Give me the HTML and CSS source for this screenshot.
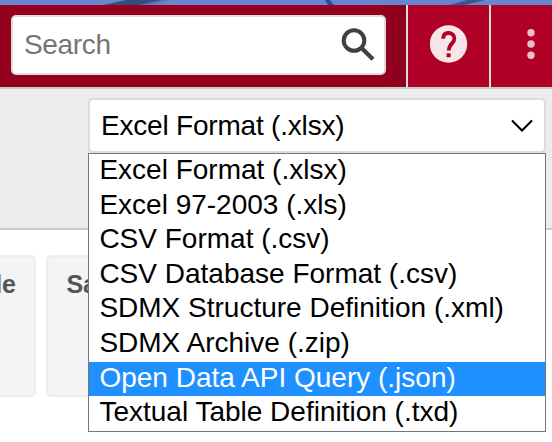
FILE: index.html
```html
<!DOCTYPE html>
<html lang="en">
<head>
<meta charset="utf-8">
<title>Download table</title>
<link rel="stylesheet" href="styles.css">
</head>
<body>
<div class="banner"><svg width="552" height="5" viewBox="0 0 552 5"><path d="M104 5L126 0H162L139 5Z" fill="#354d7d"/><path d="M139 5L162 0H170L148 5Z" fill="#5374b6"/><path d="M325 0H330L334 5H328Z" fill="#294a9c"/><path d="M450 5L467 0H485L465 5Z" fill="#3b568b"/></svg></div>
<header class="header">
  <div class="search-area">
    <div class="search">
      <span class="placeholder">Search</span>
      <svg class="search-icon" width="36" height="36" viewBox="0 0 36 36"><circle cx="14" cy="14.5" r="10.3" fill="none" stroke="#404040" stroke-width="4"/><path d="M21.5 22L33 33.2" stroke="#404040" stroke-width="4.3"/></svg>
    </div>
  </div>
  <div class="help">
    <svg width="38" height="38" viewBox="0 0 38 38"><circle cx="18.5" cy="19" r="18.7" fill="#f7e5ea"/><path d="M13.1 13.8C13.1 10 15.3 8 18.5 8S24.4 10.3 24.4 13.4C24.4 18.4 18.8 18.6 18.8 25.6" fill="none" stroke="#b00026" stroke-width="3.8"/><path d="M16.6 28.3h4v3.9h-4z" fill="#b00026"/></svg>
  </div>
  <div class="more">
    <svg width="8" height="32" viewBox="0 0 8 32"><g fill="#ebbfc9"><circle cx="4" cy="4.7" r="3.7"/><circle cx="4" cy="16" r="3.7"/><circle cx="4" cy="27.3" r="3.7"/></g></svg>
  </div>
</header>
<section class="toolbar">
  <div class="picker">
    <div class="select"><span class="value">Excel Format (.xlsx)</span>
      <svg width="22" height="14" viewBox="0 0 22 14"><path d="M1 1.5L11 11.5L21 1.5" fill="none" stroke="#000" stroke-width="2.1"/></svg>
    </div>
    <ul class="options">
      <li>Excel Format (.xlsx)</li>
      <li>Excel 97-2003 (.xls)</li>
      <li>CSV Format (.csv)</li>
      <li>CSV Database Format (.csv)</li>
      <li>SDMX Structure Definition (.xml)</li>
      <li>SDMX Archive (.zip)</li>
      <li class="active">Open Data API Query (.json)</li>
      <li>Textual Table Definition (.txd)</li>
    </ul>
  </div>
</section>
<main class="cards">
  <div class="card card-left">le</div>
  <div class="card card-right">Sa</div>
</main>
</body>
</html>
```
FILE: styles.css
```css
* { box-sizing: border-box; }
body {
  margin: 0;
  width: 552px;
  height: 442px;
  overflow: hidden;
  background: #fff;
  font: 28px "Liberation Sans", Arial, sans-serif;
  color: #000;
}
svg { display: block; flex: none; }
.banner { height: 5px; background: #6686cd; }
.header {
  display: flex;
  height: 84px;
  background: #b00026;
  border-bottom: 2px solid #ccc;
}
.search-area {
  width: 406px;
  padding: 10px 20px 12px 11px;
  background: linear-gradient(90deg, #94001e 0, #94001e 380px, #8c001d 406px);
}
.search {
  display: flex;
  align-items: center;
  justify-content: space-between;
  height: 60px;
  padding: 0 8px 0 11px;
  background: #fff;
  border: 2px solid #dcdcdc;
  border-radius: 5px;
}
.placeholder { color: #757575; letter-spacing: -0.35px; }
.search-icon { margin-top: -2px; }
.help, .more { display: flex; align-items: center; border-left: 2px solid #dcdcdc; }
.help { width: 83px; justify-content: center; padding-bottom: 4px; }
.more { width: 63px; padding: 0 0 4px 36.4px; }
.toolbar {
  height: 141px;
  padding: 9px 0 0 88px;
  background: #ededed;
  border-bottom: 2px solid #ccc;
}
.picker { position: relative; width: 458px; }
.select {
  display: flex;
  align-items: center;
  justify-content: space-between;
  height: 55px;
  padding: 0 11px 0 11px;
  background: #fff;
  border: 2px solid #dcdcdc;
  border-radius: 5px;
}
.value { letter-spacing: -0.2px; }
.options {
  position: absolute;
  top: 55px;
  left: 0;
  z-index: 1;
  width: 458px;
  height: 279px;
  margin: 0;
  padding: 0;
  list-style: none;
  background: #fff;
  border: 1px solid #767676;
}
.options li { height: 34.6px; padding-left: 10.4px; line-height: 32px; white-space: nowrap; }
.options .active { background: #1e90ff; color: #fff; }
.cards { display: flex; gap: 10px; padding-top: 25px; }
.card {
  height: 142px;
  padding-top: 13px;
  background: #f4f4f4;
  border: 2px solid #ededed;
  border-radius: 5px;
  color: #555;
  font-size: 25px;
  font-weight: bold;
  line-height: 29px;
}
.card-left { width: 36px; padding-right: 18px; border-left: 0; border-radius: 0 5px 5px 0; direction: rtl; overflow: hidden; }
.card-right { width: 250px; padding-left: 18.4px; }
```
